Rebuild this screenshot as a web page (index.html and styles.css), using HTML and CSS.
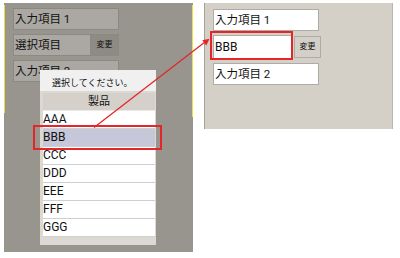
FILE: index.html
```html
<!DOCTYPE html>
<html lang="ja">
<head>
    <meta charset="UTF-8">
    <title>選択画面</title>
    <link rel="stylesheet" href="styles.css">
</head>
<body>
    <div class="stage">
        <!-- 左: 選択ダイアログ表示中 -->
        <div class="panel panel-dim">
            <div class="form">
                <div class="field">入力項目 1</div>
                <div class="select-row">
                    <div class="field label">選択項目</div>
                    <div class="change-btn">変更</div>
                </div>
                <div class="field">入力項目 2</div>
            </div>

            <div class="dialog">
                <div class="dialog-title">選択してください。</div>
                <div class="dialog-head">製品</div>
                <div class="list">
                    <div class="row">AAA</div>
                    <div class="row selected">BBB</div>
                    <div class="row">CCC</div>
                    <div class="row">DDD</div>
                    <div class="row">EEE</div>
                    <div class="row">FFF</div>
                    <div class="row">GGG</div>
                </div>
            </div>
            <div class="mark mark-left"></div>
        </div>

        <!-- 右: 選択後 -->
        <div class="panel panel-light">
            <div class="form">
                <div class="field">入力項目 1</div>
                <div class="select-row">
                    <div class="field label">BBB</div>
                    <div class="change-btn">変更</div>
                </div>
                <div class="field">入力項目 2</div>
            </div>
            <div class="mark mark-right"></div>
        </div>

        <svg class="arrow" width="400" height="258" viewBox="0 0 400 258">
            <line x1="94" y1="127.5" x2="205" y2="42" stroke="#e4262a" stroke-width="1.3"/>
            <polygon points="209.5,38.8 206.3,45.4 202.2,40.2" fill="#e4262a"/>
        </svg>
    </div>
</body>
</html>
```

FILE: styles.css
```css
body {
    margin: 0;
    background: #ffffff;
    font-family: Roboto, "Noto Sans CJK JP", sans-serif;
    color: #111;
}

.stage {
    position: relative;
    display: flex;
    align-items: flex-start;
    gap: 11px;
    padding: 3px 0 0 4px;
    width: 400px;
    height: 258px;
    box-sizing: border-box;
}

.panel {
    position: relative;
    width: 189px;
    box-sizing: border-box;
}

.panel-dim {
    height: 249px;
    background:
        linear-gradient(#eedd3c, #eedd3c) left 2px / 1px 108px no-repeat,
        linear-gradient(#eedd3c, #eedd3c) right 2px / 1px 112px no-repeat,
        #98958e;
}

.panel-light {
    height: 126px;
    background: #d4d0c8;
    border-left: 1px solid #a5a29b;
    border-right: 1px solid #b9b6af;
}

.form {
    display: flex;
    flex-direction: column;
    gap: 4px;
    padding: 5px 0 0 9px;
}

.panel-light .form {
    padding-left: 8px;
    padding-top: 6px;
}

.field {
    width: 106px;
    height: 22px;
    box-sizing: border-box;
    padding-left: 1px;
    font-size: 11.5px;
    line-height: 20px;
    white-space: nowrap;
}

.panel-dim .field {
    background: #aba8a3;
    border: 1px solid #8c8982;
}

.panel-light .field {
    background: #ffffff;
    border: 1px solid #aeaca6;
}

.select-row {
    display: flex;
    align-items: center;
}

.select-row .label {
    width: 78px;
}

.panel-light .select-row .label {
    width: 80px;
    height: 24px;
    line-height: 22px;
    font-size: 12px;
}

.change-btn {
    width: 28px;
    height: 22px;
    box-sizing: border-box;
    font-size: 8px;
    line-height: 20px;
    text-align: center;
}

.panel-dim .change-btn {
    background: #8e8b85;
    border: 1px solid #8c8982;
    border-left: none;
}

.panel-light .change-btn {
    width: 27px;
    margin-left: 1px;
    background: #d4d0c8;
    border: 1px solid #aeaca6;
}

.dialog {
    position: absolute;
    left: 36px;
    top: 67px;
    width: 116px;
    height: 175px;
    box-sizing: border-box;
    background: #dcd9d2;
    display: flex;
    flex-direction: column;
}

.dialog-title {
    height: 21px;
    box-sizing: border-box;
    padding: 8px 0 0 12px;
    background: #f0f0f0;
    font-size: 9px;
    line-height: 11px;
}

.dialog-head {
    margin: 2px 1px 0 3px;
    height: 18px;
    background: #d5d1ca;
    border-bottom: 1px solid #ebe9e5;
    box-sizing: border-box;
    text-align: center;
    font-size: 11px;
    line-height: 18px;
}

.list {
    margin: 0 1px 0 3px;
}

.row {
    height: 18px;
    box-sizing: border-box;
    background: #ffffff;
    border-bottom: 1px solid #cfcfcf;
    font-size: 12px;
    line-height: 17px;
}

.row.selected {
    background: #c6c7d8;
}

.mark {
    position: absolute;
    border: 2px solid #e4262a;
    box-sizing: border-box;
}

.mark-left {
    left: 29px;
    top: 122px;
    width: 129px;
    height: 25px;
}

.mark-right {
    left: 5px;
    top: 28px;
    width: 83px;
    height: 29px;
}

.arrow {
    position: absolute;
    left: 0;
    top: 0;
}
```
